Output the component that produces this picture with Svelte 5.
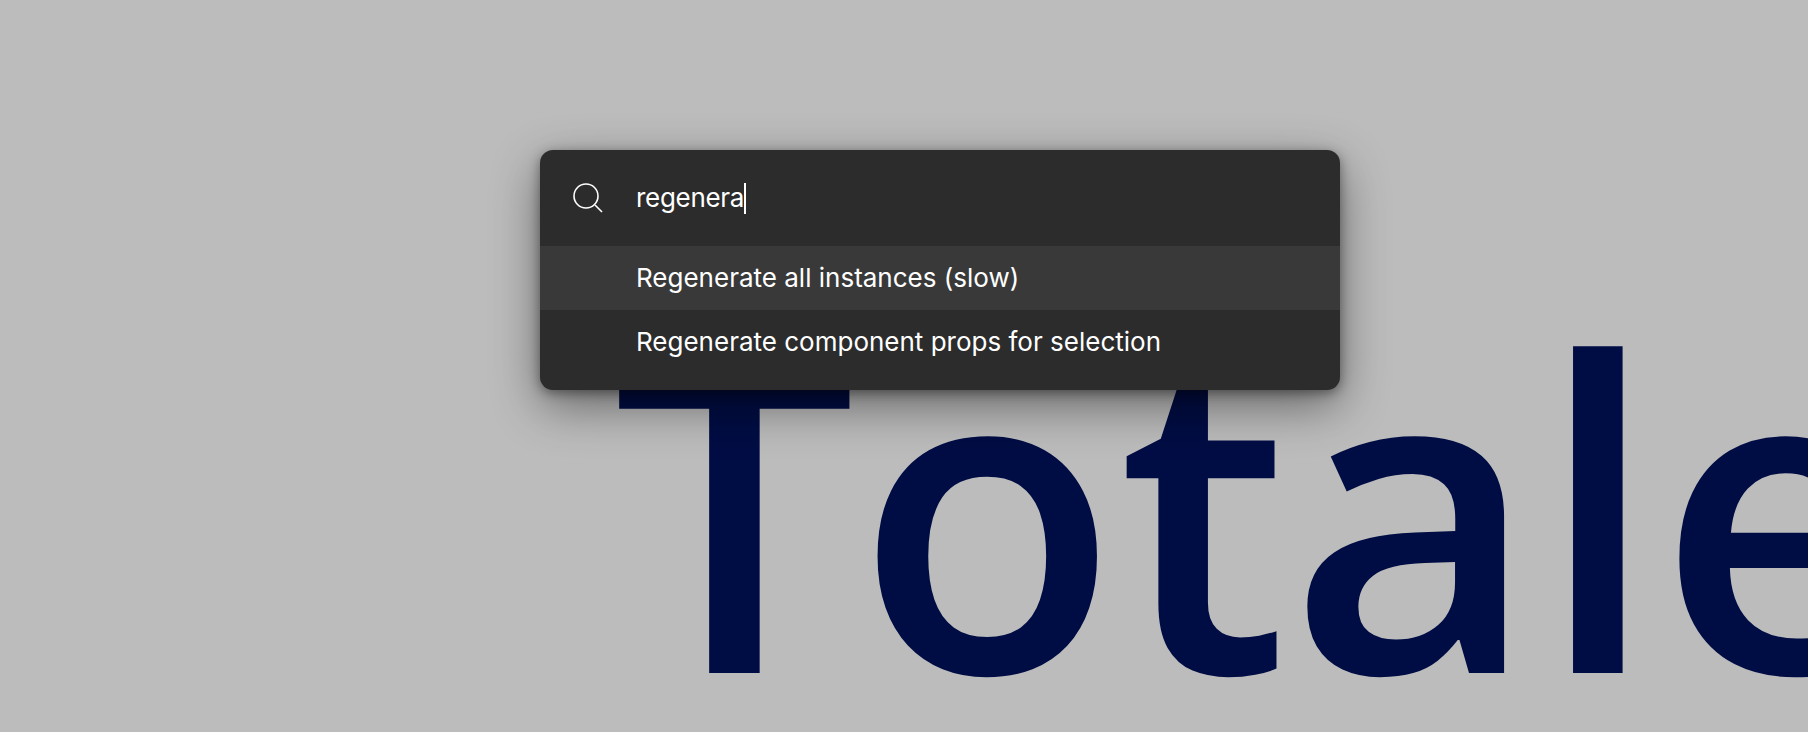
<script>
  let query = "regenera";
  const results = [
    { label: "Regenerate all instances (slow)", active: true },
    { label: "Regenerate component props for selection", active: false }
  ];
</script>

<main class="page">
  <h1 class="title">Totale</h1>

  <div class="palette">
    <div class="search">
      <svg class="search-icon" width="32" height="32" viewBox="0 0 32 32" fill="none" stroke="#fff" stroke-width="1.6">
        <circle cx="14" cy="14" r="12" />
        <path d="M23 23l7 7" />
      </svg>
      <span class="query">{query}</span><span class="caret"></span>
    </div>
    <ul class="results">
      {#each results as item}
        <li class="result" class:active={item.active}>{item.label}</li>
      {/each}
    </ul>
  </div>
</main>

<style>
  :global(body) {
    margin: 0;
    background: #bcbcbc;
  }
  .page {
    position: relative;
    width: 1808px;
    height: 732px;
    overflow: hidden;
    background: #bcbcbc;
    padding: 291px 0 0 613px;
    box-sizing: border-box;
  }
  .title {
    margin: 0;
    font-family: "Open Sans", sans-serif;
    font-weight: 600;
    font-size: 430px;
    line-height: 1;
    color: #000d44;
    white-space: nowrap;
  }
  .palette {
    position: absolute;
    left: 540px;
    top: 150px;
    width: 800px;
    padding-bottom: 16px;
    background: #2c2c2c;
    border-radius: 13px;
    box-shadow: 0 16px 48px rgba(0, 0, 0, 0.45), 0 3px 12px rgba(0, 0, 0, 0.4);
    font-family: Inter, sans-serif;
    color: #fff;
    font-size: 26px;
    overflow: hidden;
  }
  .search {
    display: flex;
    align-items: center;
    height: 96px;
    padding-left: 32px;
  }
  .search-icon {
    margin-right: 32px;
  }
  .query {
    letter-spacing: -0.3px;
    margin-top: -2px;
  }
  .caret {
    width: 2px;
    height: 31px;
    background: #fff;
  }
  .results {
    list-style: none;
    margin: 0;
    padding: 0;
  }
  .result {
    height: 64px;
    line-height: 64px;
    padding-left: 96px;
  }
  .result.active {
    background: #393939;
  }
</style>
